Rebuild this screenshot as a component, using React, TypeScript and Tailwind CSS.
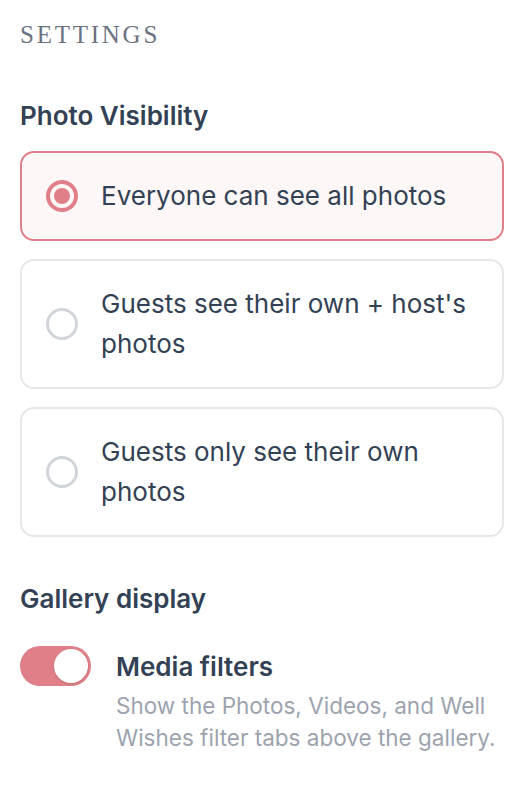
import React from "react";

function Radio({ checked }: { checked: boolean }) {
  return checked ? (
    <span className="flex h-[32px] w-[32px] shrink-0 items-center justify-center rounded-full border-[4px] border-[#e07f87]">
      <span className="h-[16px] w-[16px] rounded-full bg-[#e07f87]" />
    </span>
  ) : (
    <span className="h-[32px] w-[32px] shrink-0 rounded-full border-[3px] border-[#d1d5db]" />
  );
}

function Option({ label, checked }: { label: string; checked: boolean }) {
  return (
    <div
      className={
        "flex items-center gap-[23px] rounded-[14px] border-2 pl-[24px] pr-[20px] py-[23px] " +
        (checked ? "border-[#e07f87] bg-[#fdf8f7]" : "border-[#e5e7eb] bg-white")
      }
    >
      <Radio checked={checked} />
      <span className="text-[26px] leading-[40px] text-[#334155]">{label}</span>
    </div>
  );
}

export default function App() {
  return (
    <div
      className="min-h-[792px] bg-white pl-[20px] pr-[14px] pt-[20px]"
      style={{ fontFamily: "Inter, 'Noto Sans', sans-serif" }}
    >
      <div
        className="text-[25px] leading-[30px] tracking-[0.11em] text-[#6b7280]"
        style={{ fontFamily: "'Liberation Serif', serif" }}
      >
        SETTINGS
      </div>
      <h2 className="mt-[50px] text-[26px] font-semibold leading-[32px] text-[#334155]">
        Photo Visibility
      </h2>
      <div className="mt-[19px] flex flex-col gap-[18px]">
        <Option checked label="Everyone can see all photos" />
        <Option checked={false} label="Guests see their own + host's photos" />
        <Option checked={false} label="Guests only see their own photos" />
      </div>
      <h2 className="mt-[46px] text-[26px] font-semibold leading-[32px] text-[#334155]">
        Gallery display
      </h2>
      <div className="mt-[31px] flex gap-[25px]">
        <div className="flex h-[40px] w-[71px] shrink-0 items-center justify-end rounded-full bg-[#e07f87] pr-[3px]">
          <span className="h-[34px] w-[34px] rounded-full bg-white shadow" />
        </div>
        <div className="pt-[2px]">
          <div className="text-[26px] font-semibold leading-[38px] text-[#334155]">Media filters</div>
          <div className="mt-[4px] text-[22.5px] leading-[32px] text-[#9ca3af]">
            Show the Photos, Videos, and Well Wishes filter tabs above the gallery.
          </div>
        </div>
      </div>
    </div>
  );
}
